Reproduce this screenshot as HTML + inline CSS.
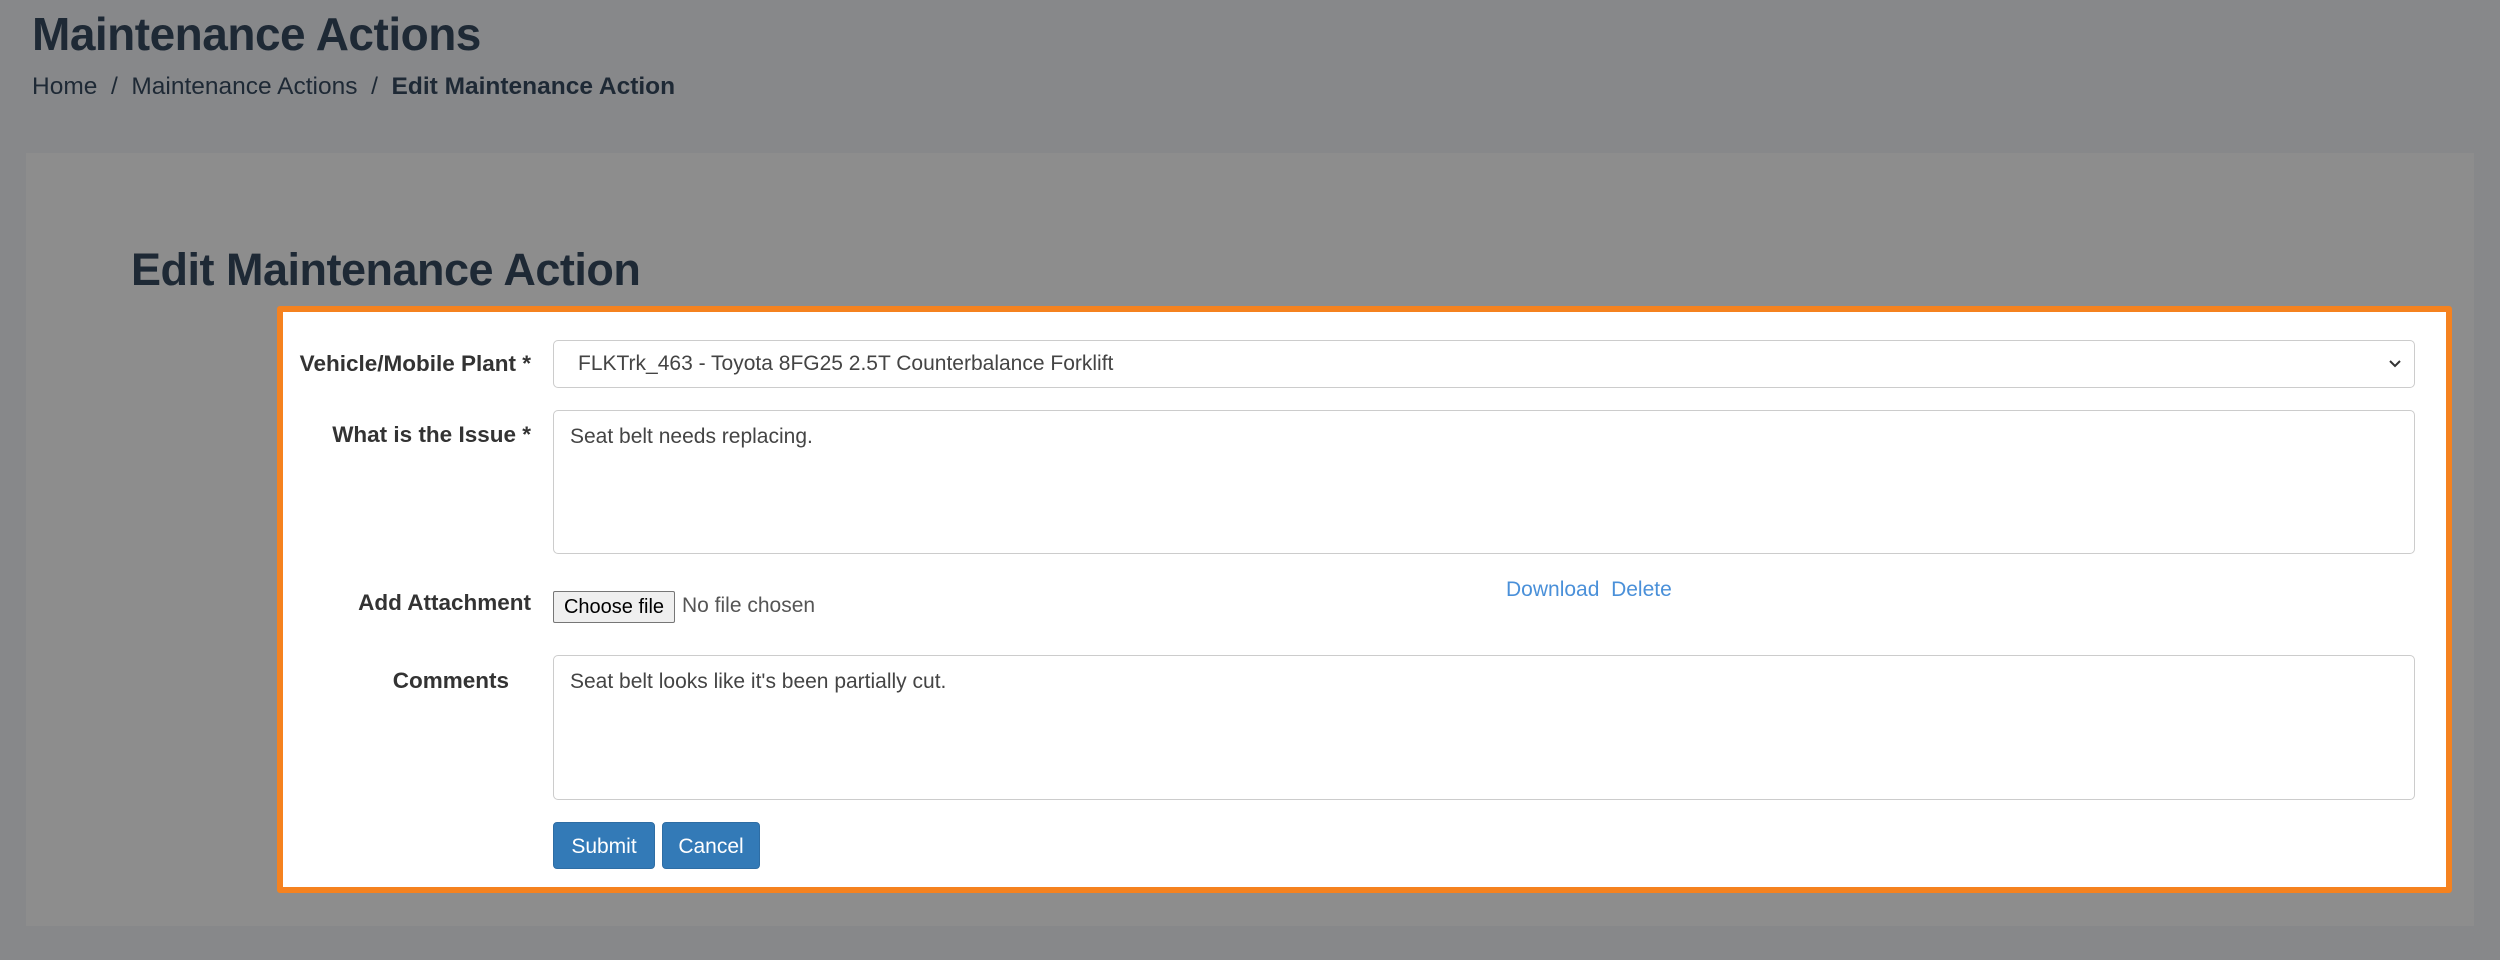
<!DOCTYPE html>
<html><head><meta charset="utf-8"><style>
*{box-sizing:border-box;margin:0;padding:0}
body{width:2500px;height:960px;background:#87888a;font-family:"Liberation Sans",sans-serif;color:#1f2a36;position:relative;overflow:hidden}
.abs{position:absolute}
h1{position:absolute;left:32px;top:7px;font-size:46px;font-weight:600;color:#1e2935;letter-spacing:-0.5px}
.bc{position:absolute;left:32px;top:73px;font-size:24.5px;color:#1e2935}
.bc b{font-weight:700}
.panel{position:absolute;left:26px;top:153px;width:2448px;height:773px;background:#8d8d8d}
h2{position:absolute;left:131px;top:244px;font-size:45px;font-weight:600;color:#1e2935;letter-spacing:-0.5px}
.box{position:absolute;left:277px;top:306px;width:2175px;height:587px;background:#fff;border:6px solid #f5821f;border-radius:3px}
.lbl{position:absolute;font-size:22.5px;font-weight:700;color:#333;text-align:right}
.inp{position:absolute;left:553px;width:1862px;border:1px solid #ccc;border-radius:5px;background:#fff;font-size:21px;color:#444;padding:14px 16px}
.btn{position:absolute;top:822px;height:47px;background:#337ab7;color:#fff;font-size:21px;border-radius:4px;text-align:center;line-height:47px;border:1px solid #2e6da4}
a{color:#4a90d9;text-decoration:none}
</style></head><body>
<h1>Maintenance Actions</h1>
<div class="bc">Home &nbsp;/&nbsp; Maintenance Actions &nbsp;/&nbsp; <b>Edit Maintenance Action</b></div>
<div class="panel"></div>
<h2>Edit Maintenance Action</h2>
<div class="box"></div>
<div class="lbl" style="right:1969px;top:351px">Vehicle/Mobile Plant *</div>
<div class="inp" style="top:340px;height:48px;padding:11px 24px">FLKTrk_463 - Toyota 8FG25 2.5T Counterbalance Forklift
<svg class="abs" style="right:12px;top:18px" width="14" height="10" viewBox="0 0 14 10"><path d="M2 2l5 5 5-5" stroke="#333" stroke-width="2" fill="none"/></svg></div>
<div class="lbl" style="right:1969px;top:422px">What is the Issue *</div>
<div class="inp" style="top:410px;height:144px">Seat belt needs replacing.</div>
<div class="lbl" style="right:1969px;top:590px">Add Attachment</div>
<div class="abs" style="left:553px;top:591px;width:122px;height:32px;background:#efefef;border:1px solid #767676;border-radius:2px;font-size:20px;line-height:30px;text-align:center;color:#000">Choose file</div>
<div class="abs" style="left:682px;top:594px;font-size:21px;color:#555">No file chosen</div>
<div class="abs" style="left:1506px;top:578px;font-size:21px"><a>Download</a>&nbsp;&nbsp;<a>Delete</a></div>
<div class="lbl" style="right:1991px;top:668px">Comments</div>
<div class="inp" style="top:655px;height:145px">Seat belt looks like it's been partially cut.</div>
<div class="btn" style="left:553px;width:102px">Submit</div>
<div class="btn" style="left:662px;width:98px">Cancel</div>
</body></html>
